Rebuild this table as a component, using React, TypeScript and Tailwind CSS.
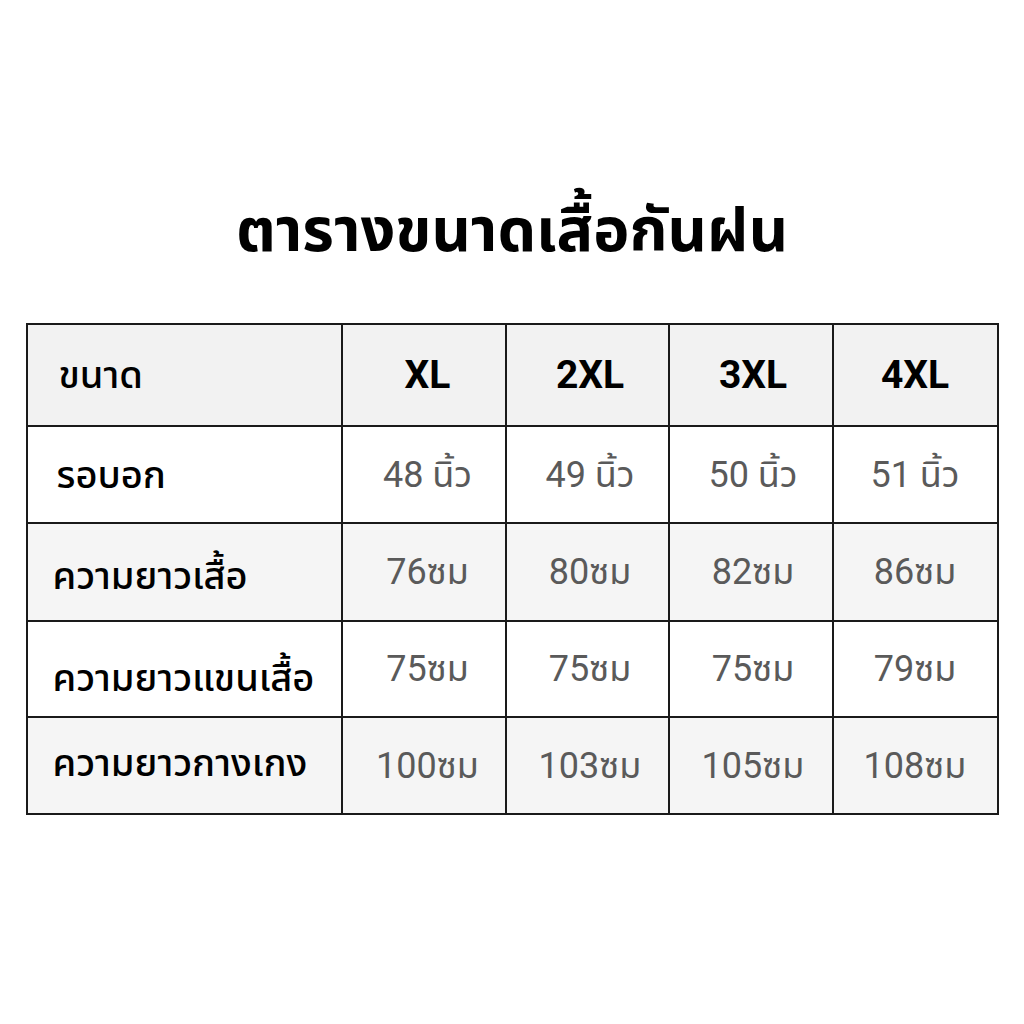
import React from "react";

const cols = ["XL", "2XL", "3XL", "4XL"];
const colPad = ["pl-[8px]", "pl-[6px]", "pl-[5px]", "pl-0"];
const rows: { label: string; values: string[]; bg: string; lcls: string }[] = [
  { label: "รอบอก", values: ["48 นิ้ว", "49 นิ้ว", "50 นิ้ว", "51 นิ้ว"], bg: "bg-white", lcls: "pl-[29px]" },
  { label: "ความยาวเสื้อ", values: ["76ซม", "80ซม", "82ซม", "86ซม"], bg: "bg-[#f5f5f5]", lcls: "pl-[25px] pt-[8px]" },
  { label: "ความยาวแขนเสื้อ", values: ["75ซม", "75ซม", "75ซม", "79ซม"], bg: "bg-white", lcls: "pl-[25px] pt-[18px]" },
  { label: "ความยาวกางเกง", values: ["100ซม", "103ซม", "105ซม", "108ซม"], bg: "bg-[#f5f5f5]", lcls: "pl-[25px] pb-[6px]" },
];
const heights = ["h-[97px]", "h-[98px]", "h-[96px]", "h-[97px]"];

export default function App() {
  return (
    <div className="w-[1024px] h-[1024px] bg-white flex flex-col items-center" style={{ fontFamily: 'Roboto, "Noto Sans Thai", "Noto Sans", sans-serif' }}>
      <h1 className="mt-[190px] text-[61px] font-bold leading-[80px] text-black">ตารางขนาดเสื้อกันฝน</h1>
      <table className="mt-[53px] border-collapse border-2 border-[#1a1a1a] w-[971px] table-fixed">
        <colgroup>
          <col className="w-[315px]" />
          <col className="w-[164px]" />
          <col className="w-[163px]" />
          <col className="w-[164px]" />
          <col className="w-[165px]" />
        </colgroup>
        <tbody>
          <tr className="h-[102px] bg-[#f2f2f2]">
            <td className="border-2 border-[#1a1a1a] pl-[31px] text-[38px] font-medium text-black">ขนาด</td>
            {cols.map((c, j) => (
              <td key={c} className={`border-2 border-[#1a1a1a] ${colPad[j]} text-center text-[39px] font-bold text-black`}>{c}</td>
            ))}
          </tr>
          {rows.map((r, i) => (
            <tr key={r.label} className={`${heights[i]} ${r.bg}`}>
              <td className={`border-2 border-[#1a1a1a] ${r.lcls} text-[38px] font-medium text-black leading-none`}>{r.label}</td>
              {r.values.map((v, j) => (
                <td key={j} className={`border-2 border-[#1a1a1a] ${colPad[j]} text-center text-[36px] text-[#5a5a5a]`}>{v}</td>
              ))}
            </tr>
          ))}
        </tbody>
      </table>
    </div>
  );
}
